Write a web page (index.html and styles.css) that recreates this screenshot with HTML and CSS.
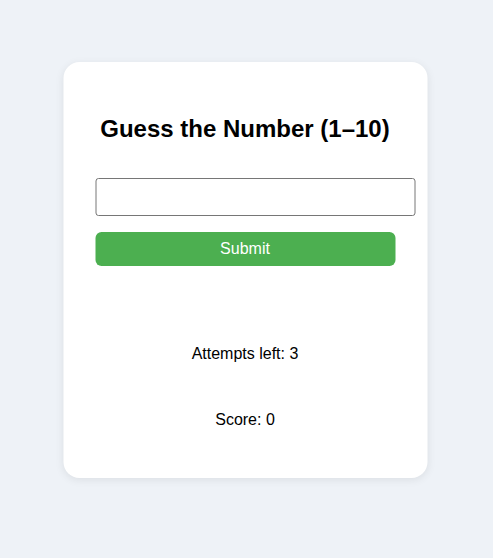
FILE: index.html
```html
<!DOCTYPE html>
<html lang="en">
<head>
    <meta charset="UTF-8">
    <meta name="viewport" content="width=device-width, initial-scale=1.0">
    <title>Guess the Number</title>
    <link rel="stylesheet" href="styles.css">
</head>
<body>
    <div class="card">
        <h1>Guess the Number (1&ndash;10)</h1>
        <input type="number" id="guess" min="1" max="10">
        <button class="button" onclick="checkGuess()">Submit</button>
        <p class="message" id="message"></p>
        <p class="attempts">Attempts left: <span id="attempts">3</span></p>
        <p class="score">Score: <span id="score">0</span></p>
    </div>

    <script>
        let secret = Math.floor(Math.random() * 10) + 1;
        let attempts = 3;
        let score = 0;

        function checkGuess() {
            const value = parseInt(document.getElementById('guess').value, 10);
            const message = document.getElementById('message');
            if (!value || value < 1 || value > 10) {
                message.textContent = 'Enter a number from 1 to 10';
                return;
            }

            if (value === secret) {
                score++;
                message.textContent = 'Correct!';
                secret = Math.floor(Math.random() * 10) + 1;
                attempts = 3;
            } else {
                attempts--;
                message.textContent = value < secret ? 'Too low' : 'Too high';
                if (attempts === 0) {
                    message.textContent = 'Out of attempts. It was ' + secret;
                    secret = Math.floor(Math.random() * 10) + 1;
                    attempts = 3;
                }
            }

            document.getElementById('attempts').textContent = attempts;
            document.getElementById('score').textContent = score;
            document.getElementById('guess').value = '';
        }
    </script>
</body>
</html>
```

FILE: styles.css
```css
body {
    font-family: "Liberation Sans", Arial, sans-serif;
    margin: 0;
    padding: 62px 0 80px;
    background: #eef2f7;
    color: #000;
}

.card {
    width: 300px;
    margin: 0 auto;
    padding: 32px;
    text-align: center;
    background: #fff;
    border-radius: 16px;
    box-shadow: 0 2px 8px rgba(0, 0, 0, 0.08);
    transform: translateX(-1.5px);
}

h1 {
    font-size: 24px;
    line-height: 28px;
    margin: 21px 0 35px;
}

input[type="number"] {
    display: block;
    width: 100%;
    padding: 9px;
    font-size: 16px;
    line-height: 18px;
    border: 1px solid #767676;
    border-radius: 3px;
    margin: 0;
}

.button {
    display: block;
    width: 100%;
    margin-top: 16px;
    padding: 8px;
    font-family: inherit;
    font-size: 16px;
    line-height: 18px;
    color: #fff;
    background: #4caf50;
    border: none;
    border-radius: 6px;
    cursor: pointer;
}

.button:hover {
    background: #43a047;
}

p {
    font-size: 16px;
    line-height: 18px;
    margin: 0;
}

.message {
    min-height: 18px;
    margin-top: 29px;
}

.attempts {
    margin-top: 32px;
}

.score {
    margin-top: 48px;
    margin-bottom: 17px;
}
```
